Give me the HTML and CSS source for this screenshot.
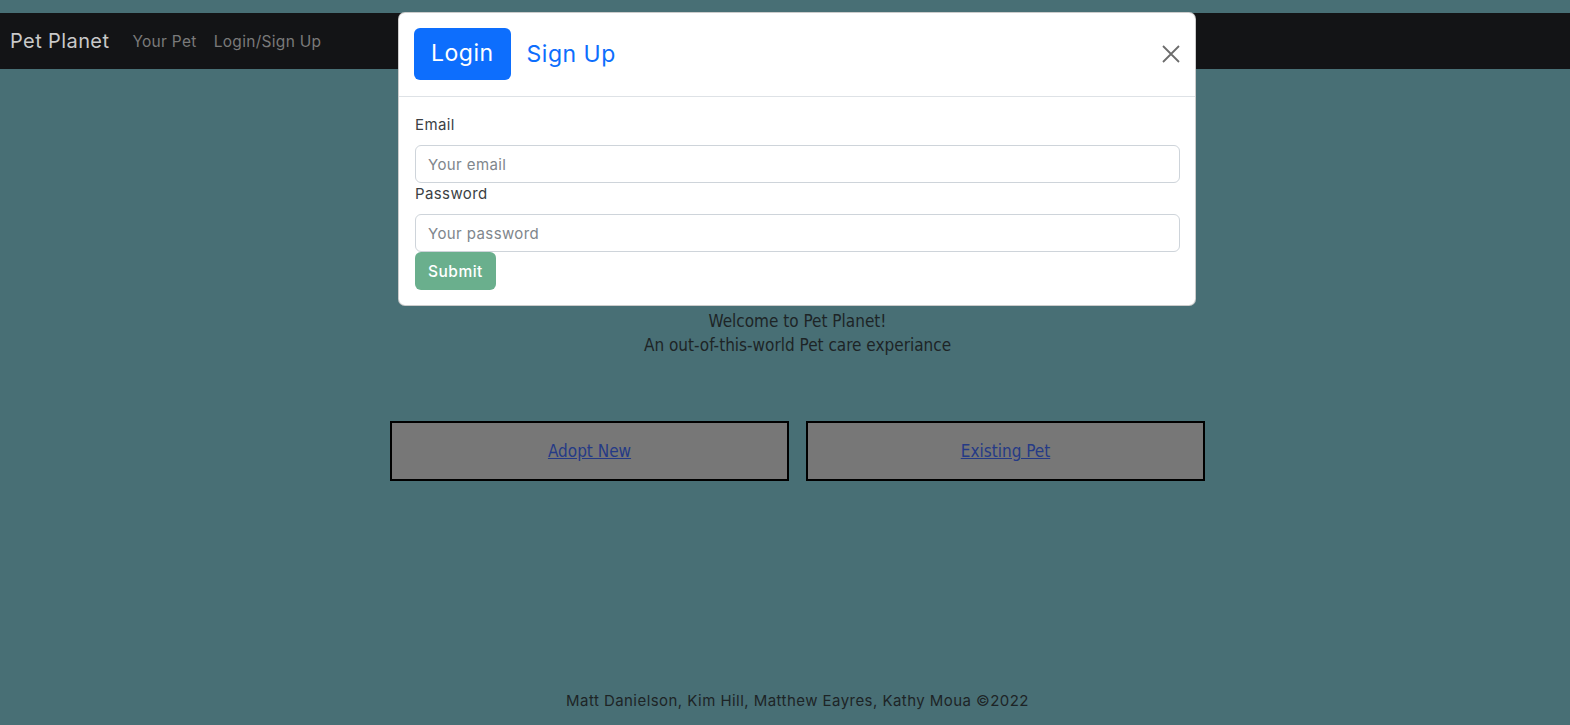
FILE: index.html
```html
<!DOCTYPE html>
<html>
<head>
<meta charset="utf-8">
<link rel="stylesheet" href="styles.css">
</head>
<body>
<div class="page">
  <nav class="navbar">
    <span class="brand">Pet Planet</span>
    <a class="nav-link">Your Pet</a>
    <a class="nav-link">Login/Sign Up</a>
  </nav>
  <main class="main">
    <div class="welcome">
      <p>Welcome to Pet Planet!</p>
      <p>An out-of-this-world Pet care experiance</p>
    </div>
    <div class="choices">
      <div class="choice"><a href="#">Adopt New</a></div>
      <div class="choice"><a href="#">Existing Pet</a></div>
    </div>
  </main>
  <footer class="footer">Matt Danielson, Kim Hill, Matthew Eayres, Kathy Moua ©2022</footer>
</div>
<div class="modal">
  <div class="modal-header">
    <button class="tab active">Login</button>
    <button class="tab">Sign Up</button>
    <button class="close" aria-label="Close">
      <svg width="18" height="18" viewBox="0 0 18 18"><path d="M1 1L17 17M17 1L1 17" stroke="#6c6c6c" stroke-width="1.8"/></svg>
    </button>
  </div>
  <form class="modal-body">
    <label class="label">Email</label>
    <input class="input" type="email" placeholder="Your email">
    <label class="label">Password</label>
    <input class="input" type="password" placeholder="Your password">
    <button class="submit" type="button">Submit</button>
  </form>
</div>
</body>
</html>
```
FILE: styles.css
```css
* { box-sizing: border-box; }
html, body { margin: 0; height: 100%; }
body {
  background: #486f75;
  font-family: Inter, "Noto Sans", sans-serif;
  letter-spacing: 0.4px;
  color: #212529;
  overflow: hidden;
}
.page {
  height: 725px;
  display: flex;
  flex-direction: column;
  padding-top: 13px;
}
.navbar {
  height: 56px;
  background: #131416;
  display: flex;
  align-items: center;
  padding-left: 10px;
  gap: 17px;
}
.brand {
  color: #c9c9c9;
  font-size: 20px;
  letter-spacing: 0.4px;
  margin-right: 6px;
}
.nav-link {
  color: #7a7a7a;
  font-size: 15.5px;
  letter-spacing: 0.3px;
}
.main {
  flex: 1;
  display: flex;
  flex-direction: column;
  align-items: center;
  padding-left: 25px;
}
.welcome {
  margin-top: 240px;
  text-align: center;
  font-family: "DejaVu Sans Condensed", "DejaVu Sans", sans-serif;
  font-stretch: condensed;
  letter-spacing: 0;
  font-size: 17px;
  color: #1d2426;
}
.welcome p { margin: 0; line-height: 24px; }
.choices {
  margin-top: 64px;
  display: flex;
  gap: 17px;
}
.choice {
  width: 399px;
  height: 60px;
  background: #777777;
  border: 2px solid #000;
  display: flex;
  align-items: center;
  justify-content: center;
  font-family: "DejaVu Sans Condensed", "DejaVu Sans", sans-serif;
  font-stretch: condensed;
  letter-spacing: 0;
  font-size: 17px;
}
.choice a { color: #253a86; }
.footer {
  text-align: center;
  padding-left: 25px;
  font-size: 15px;
  letter-spacing: 0.45px;
  color: #1d2426;
  height: 34px;
}
.modal {
  position: absolute;
  top: 12px;
  left: 398px;
  width: 798px;
  background: #fff;
  border-radius: 7px;
  border: 1px solid rgba(0,0,0,0.2);
}
.modal-header {
  display: flex;
  align-items: center;
  padding: 15px 15px 16px 15px;
  border-bottom: 1px solid #dee2e6;
  gap: 16px;
}
.tab {
  font-family: inherit;
  font-size: 23px;
  letter-spacing: 0.5px;
  border: none;
  background: none;
  color: #0d6efd;
  height: 52px;
  padding: 0 17px 2px;
  border-radius: 6px;
}
.tab:not(.active) { padding: 0; }
.tab.active { background: #0d6efd; color: #fff; }
.close {
  margin-left: auto;
  border: none;
  background: none;
  padding: 0;
  margin-right: 0;
  display: flex;
}
.modal-body {
  display: flex;
  flex-direction: column;
  align-items: flex-start;
  padding: 18px 15px 15px 16px;
}
.label {
  font-size: 15px;
  color: #3b3f44;
  margin-bottom: 10px;
  line-height: 20px;
}
.input {
  width: 765px;
  height: 38px;
  border: 1px solid #ced4da;
  border-radius: 6px;
  padding: 0 12px;
  font-family: inherit;
  letter-spacing: 0.4px;
  font-size: 15px;
  color: #212529;
}
.input::placeholder { color: #80868c; }
.input + .label { margin-top: 1px; }
.submit {
  background: #6aaf8d;
  color: #fff;
  border: none;
  border-radius: 6px;
  height: 38px;
  padding: 0 13px;
  font-family: inherit;
  letter-spacing: 0.5px;
  font-size: 15.5px;
  font-weight: 500;
}
```
